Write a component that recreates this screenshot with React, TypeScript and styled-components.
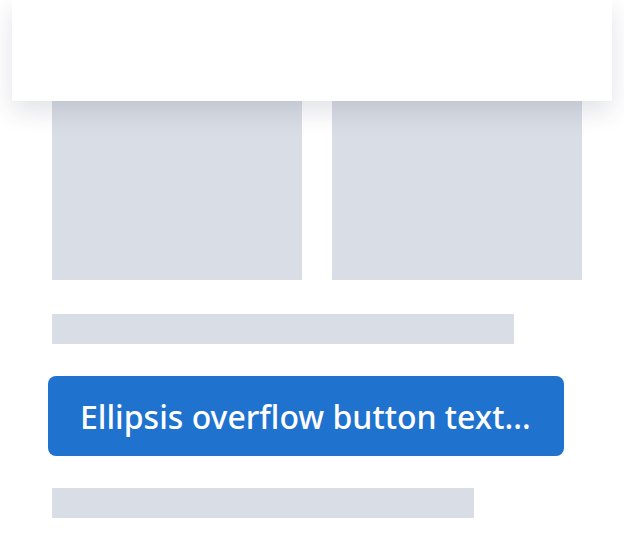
import * as React from "react"
import styled, { createGlobalStyle } from "styled-components"

const GlobalStyle = createGlobalStyle`
  html, body {
    margin: 0;
    padding: 0;
    background: #ffffff;
    font-family: "Noto Sans", "Open Sans", sans-serif;
  }
`

/**
 * Styled Components
 */

const Page = styled.div`
  width: 624px;
  height: 534px;
  overflow: hidden;
  background: #ffffff;
`

const Header = styled.div`
  position: relative;
  z-index: 1;
  height: 101px;
  margin: 0 12px;
  background: #ffffff;
  box-shadow: 0 10px 24px rgba(40, 50, 75, 0.14);
`

const Content = styled.div`
  display: flex;
  flex-direction: column;
  align-items: flex-start;
  padding: 0 42px 0 52px;
`

const Tiles = styled.div`
  display: flex;
  gap: 30px;
`

const Tile = styled.div`
  width: 250px;
  height: 179px;
  background: #d9dde5;
`

const Bar = styled.div<{ $width: number; $top: number }>`
  width: ${(p) => p.$width}px;
  height: 30px;
  margin-top: ${(p) => p.$top}px;
  background: #d9dde5;
`

const Button = styled.button`
  box-sizing: border-box;
  width: 516px;
  height: 80px;
  margin: 32px 0 0 -4px;
  padding: 0 32px;
  border: none;
  border-radius: 8px;
  background: #2072cf;
  color: #ffffff;
  font-family: "Noto Sans", "Open Sans", sans-serif;
  font-size: 32px;
  font-weight: 500;
  text-align: left;
  white-space: nowrap;
  overflow: hidden;
  text-overflow: ellipsis;
  cursor: pointer;
`

export default function App() {
  return (
    <Page>
      <GlobalStyle />
      <Header />
      <Content>
        <Tiles>
          <Tile />
          <Tile />
        </Tiles>
        <Bar $width={462} $top={34} />
        <Button>Ellipsis overflow button text...</Button>
        <Bar $width={422} $top={32} />
      </Content>
    </Page>
  )
}
